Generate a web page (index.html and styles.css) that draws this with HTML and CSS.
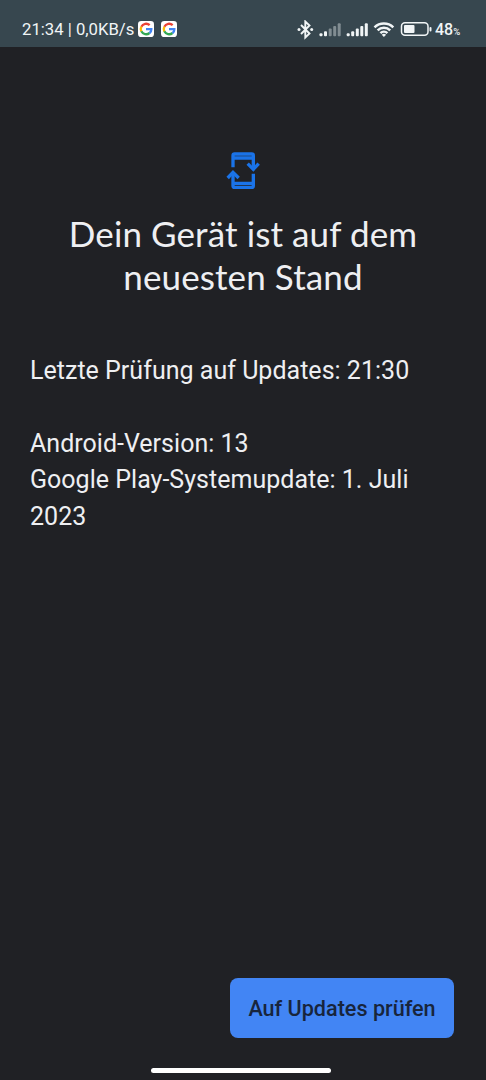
FILE: index.html
```html
<!DOCTYPE html>
<html lang="de">
<head>
    <meta charset="UTF-8">
    <meta name="viewport" content="width=device-width, initial-scale=1.0">
    <title>Systemupdate</title>
    <link rel="stylesheet" href="styles.css">
</head>
<body>
    <header class="statusbar">
        <span class="clock">21:34 | 0,0KB/s</span>
        <svg class="google" viewBox="0 0 48 48">
            <rect width="48" height="48" rx="10" fill="#fff"/>
            <g fill="none" stroke-width="7">
                <path d="M35 12.5A16 16 0 0 0 10 17" stroke="#ea4335"/>
                <path d="M10 17a16 16 0 0 0 0 14.5" stroke="#fbbc05"/>
                <path d="M10 31a16 16 0 0 0 24.5 5" stroke="#34a853"/>
                <path d="M24 24.5h16c0 5-2 9-5.5 12" stroke="#4285f4"/>
            </g>
        </svg>
        <svg class="google" viewBox="0 0 48 48">
            <rect width="48" height="48" rx="10" fill="#fff"/>
            <g fill="none" stroke-width="7">
                <path d="M35 12.5A16 16 0 0 0 10 17" stroke="#ea4335"/>
                <path d="M10 17a16 16 0 0 0 0 14.5" stroke="#fbbc05"/>
                <path d="M10 31a16 16 0 0 0 24.5 5" stroke="#34a853"/>
                <path d="M24 24.5h16c0 5-2 9-5.5 12" stroke="#4285f4"/>
            </g>
        </svg>
        <!-- bluetooth, sim 1, sim 2, wifi, battery -->
        <svg class="system" viewBox="0 0 136 20" fill="#f1f5f6">
            <path d="M4 5l8.500 8.500-4.200 4V1.500l4.200 4L4 14" fill="none" stroke="#f1f5f6" stroke-width="1.900"/>
            <circle cx="2" cy="9.500" r="1.500"/>
            <circle cx="14.700" cy="9.500" r="1.500"/>
            <rect x="22.500" y="13.200" width="3" height="3" rx="1"/>
            <rect x="27" y="11.200" width="3" height="5" rx="1"/>
            <g opacity=".4">
                <rect x="31.700" y="8.500" width="3" height="7.700" rx="1"/>
                <rect x="36.200" y="6" width="3" height="10.200" rx="1"/>
                <rect x="40.700" y="3.200" width="3" height="13" rx="1"/>
            </g>
            <rect x="49.700" y="13.200" width="3" height="3" rx="1"/>
            <rect x="54.200" y="11.200" width="3" height="5" rx="1"/>
            <rect x="58.800" y="8.500" width="3" height="7.700" rx="1"/>
            <rect x="63.300" y="6" width="3" height="10.200" rx="1"/>
            <rect x="67.800" y="3.200" width="3" height="13" rx="1"/>
            <g fill="none" stroke="#f1f5f6" stroke-width="2.500">
                <path d="M77.500 7.300a13.500 13.500 0 0 1 18.800 0"/>
                <path d="M80.600 10.400a9 9 0 0 1 12.600 0"/>
                <path d="M83.400 13.200a5 5 0 0 1 7 0"/>
            </g>
            <path d="M84.700 14.700a3.200 3.200 0 0 1 4.400 0l-2.200 2.300z"/>
            <rect x="104.500" y="2.800" width="26.500" height="12.500" rx="3.500" fill="none" stroke="#f1f5f6" stroke-width="1.500"/>
            <rect x="107" y="5" width="10.500" height="8" rx="1"/>
            <rect x="132.500" y="7" width="2" height="4.500" rx="1"/>
        </svg>
        <span class="percent">48<small>%</small></span>
    </header>

    <main>
        <svg class="update-icon" viewBox="30 30 120 120" fill="none" stroke="#1a73e8" stroke-width="10">
            <path d="M60 82V47q0-5 5-5h51q5 0 5 5v35M60 54h61"/>
            <path d="M104 71l17 17 16-17"/>
            <path d="M121 101v36q0 5-5 5H65q-5 0-5-5v-36M60 130h61"/>
            <path d="M44 114l16-17 17 17"/>
        </svg>
        <h1>Dein Gerät ist auf dem<br>neuesten Stand</h1>
        <p>Letzte Prüfung auf Updates: 21:30</p>
        <p>Android-Version: 13<br>Google Play-Systemupdate: 1. Juli<br>2023</p>
    </main>

    <footer>
        <button class="btn">Auf Updates prüfen</button>
        <div class="home-bar"></div>
    </footer>
</body>
</html>
```

FILE: styles.css
```css
* {
    box-sizing: border-box;
}
body {
    margin: 0;
    height: 1080px;
    display: flex;
    flex-direction: column;
    background: #202125;
    color: #eeeff2;
    font-family: Roboto, sans-serif;
    overflow: hidden;
}
.statusbar {
    display: flex;
    align-items: center;
    height: 47px;
    padding: 12px 0 0 22px;
    background: #37474f;
    color: #f1f5f6;
    font-size: 16.7px;
    line-height: 35px;
    white-space: nowrap;
}
.clock {
    width: 116px;
    font-weight: 450;
}
.google {
    width: 16px;
    height: 16px;
    margin: -1px 7px 0 0;
}
.system {
    width: 136px;
    height: 20px;
    margin-left: 113px;
}
.percent {
    margin-left: 2px;
    padding-top: 1px;
    font-size: 16px;
    font-weight: 500;
}
.percent small {
    font-size: 9.5px;
}
main {
    flex: 1;
    padding: 103px 30px 0;
}
.update-icon {
    display: block;
    width: 40px;
    height: 40px;
    margin: 0 auto;
}
h1 {
    margin: 22px 0 54.6px;
    font-family: Lato, sans-serif;
    font-size: 35px;
    font-weight: 400;
    line-height: 43px;
    letter-spacing: 0.1px;
    text-align: center;
    white-space: nowrap;
}
p {
    margin: 0 0 36.5px;
    font-size: 25px;
    line-height: 36.5px;
    letter-spacing: 0.02px;
    white-space: nowrap;
}
footer {
    display: flex;
    flex-direction: column;
    align-items: flex-end;
    height: 102px;
}
.btn {
    width: 224px;
    height: 60px;
    margin-right: 32px;
    padding: 0;
    border: 0;
    border-radius: 8px;
    background: #4285f4;
    color: #18253c;
    font-family: Roboto, sans-serif;
    font-size: 21.6px;
    font-weight: 500;
}
.home-bar {
    align-self: center;
    width: 180px;
    height: 5px;
    margin-top: 30px;
    margin-right: 4px;
    border-radius: 3px;
    background: #fff;
}
```
